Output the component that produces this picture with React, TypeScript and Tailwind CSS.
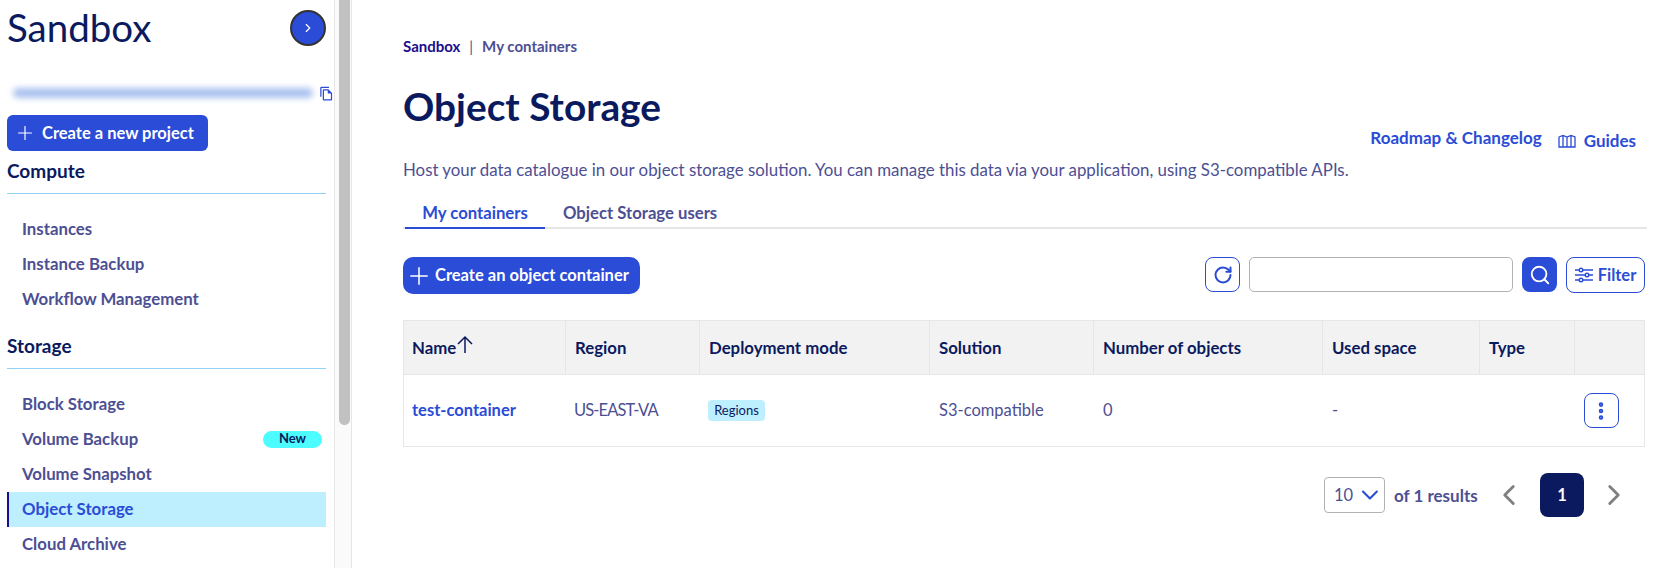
import { ChevronDown, ChevronLeft, ChevronRight, EllipsisVertical, Plus, RotateCw, Search } from 'lucide-react'
import { MdOutlineFileCopy } from 'react-icons/md'

const font = "font-['Lato','Open_Sans',sans-serif]"

function NavItem({ label, badge, active }: { label: string; badge?: string; active?: boolean }) {
  return (
    <div
      className={`flex h-[35px] items-center justify-between pb-[1px] pr-[4px] text-[16.8px] font-bold ${
        active ? 'border-l-2 border-[#1b0d8f] bg-[#bdefff] pl-[13px] text-[#2a4cd6]' : 'pl-[15px] text-[#4d4f93]'
      }`}
    >
      <span>{label}</span>
      {badge && (
        <span className="flex h-[17px] w-[59px] items-center justify-center rounded-full bg-[#4dfcff] text-[13px] font-bold text-[#0b1a5e]">
          {badge}
        </span>
      )}
    </div>
  )
}

function NavSection({ title, children }: { title: string; children: React.ReactNode }) {
  return (
    <div>
      <div className="flex h-[43px] items-center border-b border-[#8fd3f5] pb-[1px] text-[19px] font-bold text-[#0b1a5e]">
        {title}
      </div>
      <div className="pt-[18px]">{children}</div>
    </div>
  )
}

function Sidebar() {
  return (
    <aside className="flex h-[568px] w-[352px] shrink-0 overflow-hidden">
      <div className="w-[335px] shrink-0 border-r border-[#e6e6e6] pl-[7px] pr-[8px]">
        <div className="flex h-[56px] items-center justify-between">
          <h2 className="text-[38.5px] font-normal text-[#0b1a5e]">Sandbox</h2>
          <button className="flex h-[36px] w-[36px] items-center justify-center rounded-full border-2 border-[#333] bg-[#2a4cd6] text-white">
            <ChevronRight size={14} />
          </button>
        </div>
        <div className="mt-[26px] flex h-[22px] items-center justify-between">
          <div className="ml-[6px] h-[10px] w-[300px] rounded-full bg-[#a9c1ee] blur-[3px]" />
          <MdOutlineFileCopy size={15} className="mr-[-8px] text-[#2a4cd6]" />
        </div>
        <button className="mt-[11px] flex h-[36px] w-[201px] items-center gap-[6px] rounded-[6px] bg-[#2a4cd6] pl-[7px] text-[16.5px] font-bold text-white">
          <Plus size={22} strokeWidth={1.3} />
          Create a new project
        </button>
        <NavSection title="Compute">
          <NavItem label="Instances" />
          <NavItem label="Instance Backup" />
          <NavItem label="Workflow Management" />
        </NavSection>
        <div className="mt-[9px]">
          <NavSection title="Storage">
            <NavItem label="Block Storage" />
            <NavItem label="Volume Backup" badge="New" />
            <NavItem label="Volume Snapshot" />
            <NavItem label="Object Storage" active />
            <NavItem label="Cloud Archive" />
          </NavSection>
        </div>
      </div>
      <div className="flex w-[17px] justify-center border-r border-[#e6e6e6] bg-[#fafafa] pl-[2px]">
        <div className="h-[425px] w-[11px] rounded-b-full bg-[#c1c1c1]" />
      </div>
    </aside>
  )
}

const columns = [
  { label: 'Name', width: 'w-[162px] pl-[8px]' },
  { label: 'Region', width: 'w-[134px] pl-[9px]' },
  { label: 'Deployment mode', width: 'w-[230px] pl-[9px]' },
  { label: 'Solution', width: 'w-[164px] pl-[9px]' },
  { label: 'Number of objects', width: 'w-[229px] pl-[9px]' },
  { label: 'Used space', width: 'w-[157px] pl-[9px]' },
  { label: 'Type', width: 'w-[95px] pl-[9px]' },
  { label: '', width: 'flex-1' },
]

function ContainersTable() {
  return (
    <div className="mt-[26px] w-[1242px] border border-[#e6e6e6] text-[16.5px]">
      <div className="flex h-[53px] bg-[#f2f2f2] text-[16.8px] font-bold text-[#0b1a5e]">
        {columns.map((c, i) => (
          <div
            key={i}
            className={`flex items-center border-r border-[#e6e6e6] last:border-r-0 ${c.width}`}
          >
            {c.label}
            {c.label === 'Name' && (
              <svg width="18" height="20" viewBox="0 0 18 20" className="mb-[6px]" fill="none" stroke="#0b1a5e" strokeWidth="1.5">
                <path d="M9 18V2M2 9l7-7 7 7" />
              </svg>
            )}
          </div>
        ))}
      </div>
      <div className="flex h-[72px] items-center border-t border-[#e6e6e6] text-[#4d4f93]">
        <div className="w-[162px] pl-[8px] font-bold text-[#2a4cd6]">test-container</div>
        <div className="w-[134px] pl-[8px] tracking-[-0.9px]">US-EAST-VA</div>
        <div className="flex w-[230px] pl-[8px]">
          <span className="flex h-[21px] w-[57px] items-center justify-center rounded-[4px] bg-[#bdefff] text-[13px] text-[#0b1a5e]">
            Regions
          </span>
        </div>
        <div className="w-[164px] pl-[9px]">S3-compatible</div>
        <div className="w-[229px] pl-[9px]">0</div>
        <div className="w-[157px] pl-[9px]">-</div>
        <div className="w-[95px]" />
        <div className="flex flex-1 justify-center pr-[17px]">
          <button className="flex h-[35px] w-[35px] items-center justify-center rounded-[8px] border border-[#2a4cd6] text-[#2a4cd6]">
            <EllipsisVertical size={22} strokeWidth={3} />
          </button>
        </div>
      </div>
    </div>
  )
}

export default function App() {
  return (
    <div className={`flex h-[568px] w-[1659px] overflow-hidden bg-white ${font}`}>
      <Sidebar />
      <main className="flex-1 pl-[51px] pr-[12px]">
        <div className="mt-[36px] flex h-[20px] items-center gap-[9px] text-[15px] font-bold">
          <span className="text-[#1b0d8f]">Sandbox</span>
          <span className="font-normal text-[#4d4f93]">|</span>
          <span className="text-[#4d4f93]">My containers</span>
        </div>
        <div className="mt-[21px] flex h-[84px] justify-between">
          <h1 className="text-[38.8px] font-bold text-[#0b1a5e]">Object Storage</h1>
          <div className="mt-[48px] flex pr-[11px] text-[17px] font-bold text-[#2a4cd6]">
            <span>Roadmap &amp; Changelog</span>
            <span className="ml-[16px] mt-[4px] flex h-[24px] items-center gap-[8px]">
              <svg width="18" height="14" viewBox="0 0 18 14" fill="none" stroke="#2a4cd6" strokeWidth="1.3">
                <path d="M1 3l4-1.5 4 1.5 4-1.5 4 1.5v10H1zM5 2v11M9 3v10M13 2v11" />
              </svg>
              Guides
            </span>
          </div>
        </div>
        <p className="mt-[-4px] text-[16.85px] text-[#4d4f93]">
          Host your data catalogue in our object storage solution. You can manage this data via your application, using S3-compatible APIs.
        </p>
        <div className="mt-[19px] flex h-[28px] w-[1244px] border-b-2 border-[#e6e6e6] text-[16.7px] font-bold">
          <div className="-mb-[2px] ml-[2px] flex w-[140px] justify-center border-b-2 border-[#2a4cd6] text-[#2a4cd6]">My containers</div>
          <div className="ml-[18px] text-[#4d4f93]">Object Storage users</div>
        </div>
        <div className="mt-[28px] flex h-[37px] w-[1242px] justify-between">
          <button className="flex h-[37px] w-[237px] items-center gap-[2px] rounded-[10px] bg-[#2a4cd6] pl-[2px] text-[16.5px] font-bold text-white">
            <Plus size={28} strokeWidth={1.3} />
            Create an object container
          </button>
          <div className="flex gap-[9px]">
            <button className="flex h-[35px] w-[35px] items-center justify-center rounded-[8px] border border-[#2a4cd6] text-[#2a4cd6]">
              <RotateCw size={20} strokeWidth={2.4} />
            </button>
            <input className="h-[35px] w-[264px] rounded-[5px] border border-[#b3b3b3]" />
            <button className="flex h-[35px] w-[35px] items-center justify-center rounded-[8px] bg-[#2a4cd6] text-white">
              <Search size={22} strokeWidth={2} />
            </button>
            <button className="flex h-[36px] w-[79px] items-center justify-center gap-[5px] rounded-[8px] border border-[#2a4cd6] text-[16.5px] font-bold text-[#2a4cd6]">
              <svg width="18" height="16" viewBox="0 0 18 16" fill="#ffffff" stroke="#2a4cd6" strokeWidth="1.4">
                <path d="M0 3h18M0 8h18M0 13h18" />
                <circle cx="6" cy="3" r="1.8" />
                <circle cx="12" cy="8" r="1.8" />
                <circle cx="6" cy="13" r="1.8" />
              </svg>
              Filter
            </button>
          </div>
        </div>
        <ContainersTable />
        <div className="mt-[26px] flex h-[44px] w-[1242px] items-center">
          <div className="ml-[921px] flex h-[36px] w-[61px] items-center rounded-[4px] border border-[#b3b3b3] pl-[9px] text-[16.5px] text-[#4d4f93]">
            10
            <ChevronDown size={28} className="ml-[3px] text-[#2a4cd6]" strokeWidth={1.8} />
          </div>
          <span className="ml-[9px] w-[84px] whitespace-nowrap text-[17px] font-bold text-[#4d4f93]">of 1 results</span>
          <ChevronLeft size={34} strokeWidth={2} className="ml-[14px] text-[#808080]" />
          <button className="ml-[14px] flex h-[44px] w-[44px] items-center justify-center rounded-[8px] bg-[#0b1a5e] text-[16.5px] font-bold text-white">1</button>
          <ChevronRight size={34} strokeWidth={2} className="ml-[13px] text-[#808080]" />
        </div>
      </main>
    </div>
  )
}
